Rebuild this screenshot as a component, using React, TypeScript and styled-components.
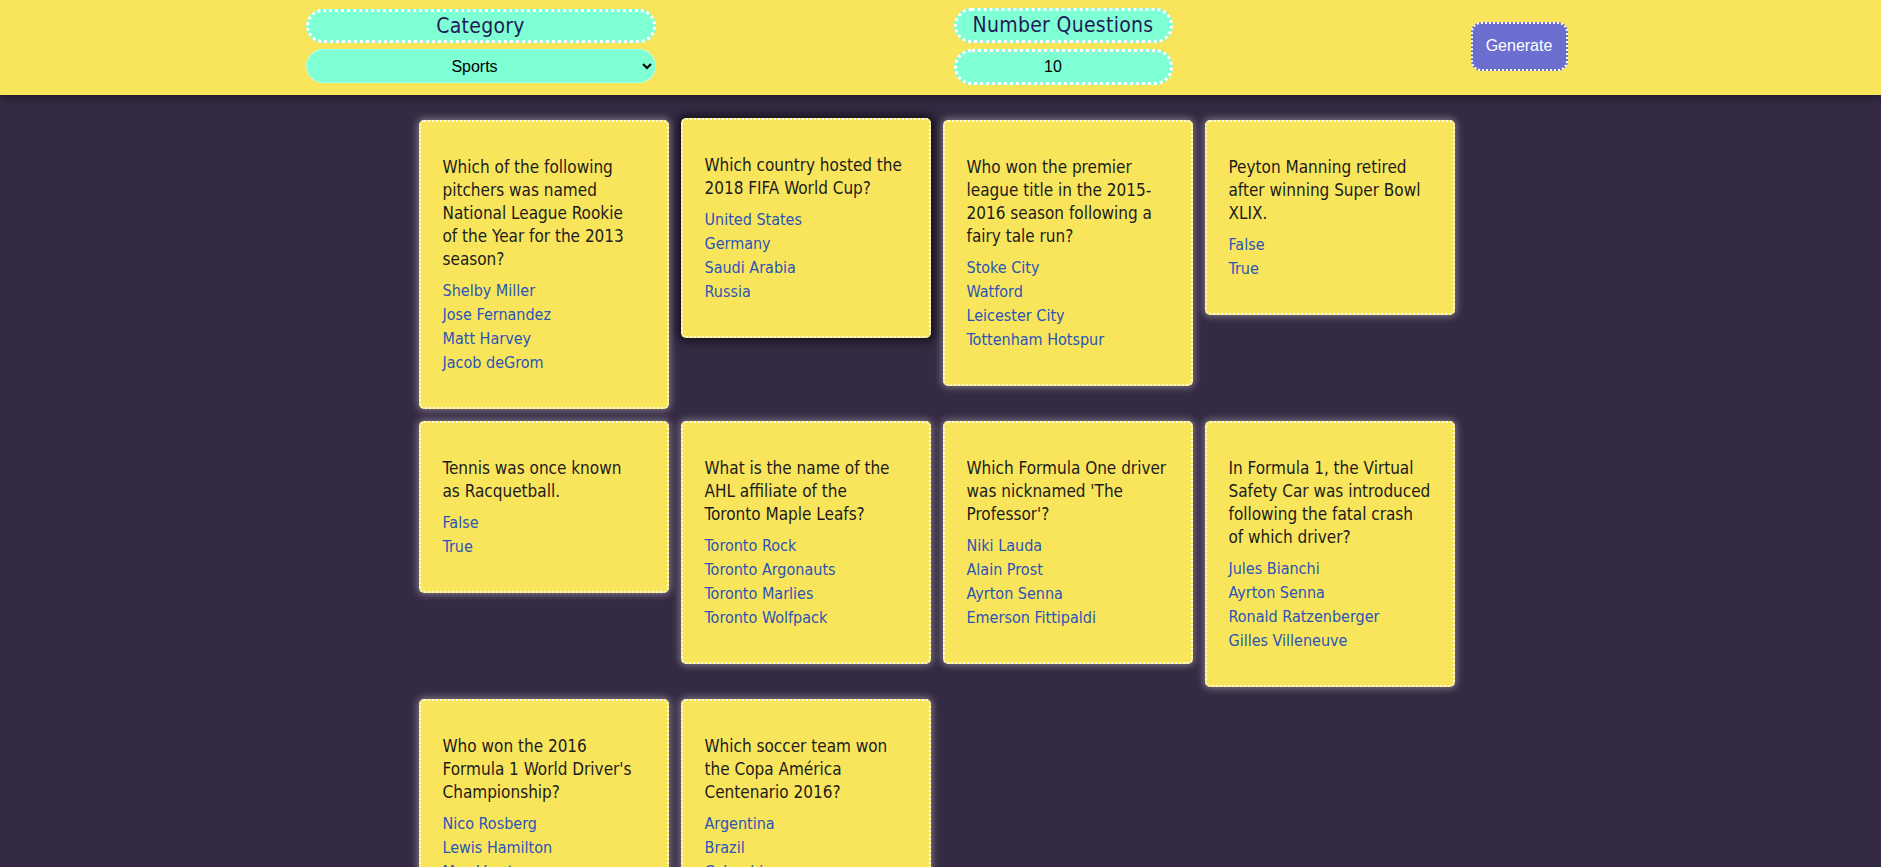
import React from "react";
import styled, { createGlobalStyle, css } from "styled-components";

const GlobalStyle = createGlobalStyle`
  html, body {
    margin: 0;
    padding: 0;
    background: #342a43;
  }
  body {
    font-family: "Liberation Sans", Arial, sans-serif;
  }
`;

const narrow = `"DejaVu Sans Condensed", "DejaVu Sans", "Liberation Sans", sans-serif`;

const Page = styled.div`
  min-height: 100vh;
  background: #342a43;
`;

const Header = styled.header`
  position: relative;
  z-index: 1;
  height: 95px;
  box-sizing: border-box;
  padding: 0 8px 3px 0;
  background: #f9e55c;
  display: flex;
  align-items: center;
  justify-content: center;
  gap: 298px;
  box-shadow: 0 2px 8px rgba(0, 0, 0, 0.45);
`;

const Field = styled.div`
  display: flex;
  flex-direction: column;
  gap: 6px;
`;

const Label = styled.div<{ $w: number; $h: number }>`
  width: ${(p) => p.$w}px;
  height: ${(p) => p.$h}px;
  box-sizing: border-box;
  background: #7fffd4;
  border: 3px dotted #ffffff;
  border-radius: 20px;
  display: flex;
  align-items: center;
  justify-content: center;
  font-family: ${narrow};
  font-size: 21px;
  letter-spacing: 0.3px;
  color: #221c56;
  white-space: nowrap;
`;

const Select = styled.select`
  width: 350px;
  height: 34px;
  box-sizing: border-box;
  background: #7fffd4;
  border: 1px dotted #ffffff;
  border-radius: 17px;
  padding: 0 8px;
  font-family: "Liberation Sans", Arial, sans-serif;
  font-size: 16px;
  color: #000;
  text-align: center;
  text-align-last: center;
  outline: none;
`;

const NumberInput = styled.input`
  width: 219px;
  height: 36px;
  box-sizing: border-box;
  background: #7fffd4;
  border: 3px dotted #ffffff;
  border-radius: 18px;
  padding: 0 5px 0 0;
  font-family: "Liberation Sans", Arial, sans-serif;
  font-size: 16px;
  color: #000;
  text-align: center;
  outline: none;
`;

const Button = styled.button`
  width: 97px;
  height: 49px;
  box-sizing: border-box;
  background: #6b6dcf;
  border: 2px dotted #ffffff;
  border-radius: 10px;
  color: #ffffff;
  font-family: "Liberation Sans", Arial, sans-serif;
  font-size: 16px;
  cursor: pointer;
`;

const Grid = styled.main`
  display: grid;
  grid-template-columns: repeat(4, 250px);
  gap: 12px;
  align-items: start;
  justify-content: center;
  padding: 25px 8px 40px 0;
`;

const Card = styled.article<{ $raised?: boolean }>`
  box-sizing: border-box;
  background: #f9e55c;
  border: 2px dotted #fffbe6;
  border-radius: 5px;
  padding: 34px 22px 32px;
  box-shadow: 0 0 7px 2px rgba(255, 255, 255, 0.32);
  ${(p) =>
    p.$raised &&
    css`
      transform: translateY(-2px);
      box-shadow: 0 0 9px 4px rgba(0, 0, 0, 0.55);
    `}
`;

const Question = styled.p`
  margin: 0 0 8px;
  font-family: ${narrow};
  font-size: 17px;
  line-height: 23px;
  color: #1c1c1c;
  white-space: nowrap;
`;

const Answers = styled.ul`
  list-style: none;
  margin: 0;
  padding: 0;
`;

const Answer = styled.li`
  font-family: ${narrow};
  font-size: 16px;
  line-height: 24px;
  color: #2a54b6;
  white-space: nowrap;
`;

type Q = { lines: string[]; answers: string[]; raised?: boolean };

const questions: Q[] = [
  {
    lines: [
      "Which of the following",
      "pitchers was named",
      "National League Rookie",
      "of the Year for the 2013",
      "season?",
    ],
    answers: ["Shelby Miller", "Jose Fernandez", "Matt Harvey", "Jacob deGrom"],
  },
  {
    lines: ["Which country hosted the", "2018 FIFA World Cup?"],
    answers: ["United States", "Germany", "Saudi Arabia", "Russia"],
    raised: true,
  },
  {
    lines: [
      "Who won the premier",
      "league title in the 2015-",
      "2016 season following a",
      "fairy tale run?",
    ],
    answers: ["Stoke City", "Watford", "Leicester City", "Tottenham Hotspur"],
  },
  {
    lines: ["Peyton Manning retired", "after winning Super Bowl", "XLIX."],
    answers: ["False", "True"],
  },
  {
    lines: ["Tennis was once known", "as Racquetball."],
    answers: ["False", "True"],
  },
  {
    lines: ["What is the name of the", "AHL affiliate of the", "Toronto Maple Leafs?"],
    answers: ["Toronto Rock", "Toronto Argonauts", "Toronto Marlies", "Toronto Wolfpack"],
  },
  {
    lines: ["Which Formula One driver", "was nicknamed 'The", "Professor'?"],
    answers: ["Niki Lauda", "Alain Prost", "Ayrton Senna", "Emerson Fittipaldi"],
  },
  {
    lines: [
      "In Formula 1, the Virtual",
      "Safety Car was introduced",
      "following the fatal crash",
      "of which driver?",
    ],
    answers: ["Jules Bianchi", "Ayrton Senna", "Ronald Ratzenberger", "Gilles Villeneuve"],
  },
  {
    lines: ["Who won the 2016", "Formula 1 World Driver's", "Championship?"],
    answers: ["Nico Rosberg", "Lewis Hamilton", "Max Verstappen", "Sebastian Vettel"],
  },
  {
    lines: ["Which soccer team won", "the Copa América", "Centenario 2016?"],
    answers: ["Argentina", "Brazil", "Colombia", "Chile"],
  },
];

export default function App() {
  return (
    <Page>
      <GlobalStyle />
      <Header>
        <Field>
          <Label $w={350} $h={34}>Category</Label>
          <Select defaultValue="sports">
            <option value="sports">Sports</option>
            <option value="history">History</option>
            <option value="science">Science</option>
          </Select>
        </Field>
        <Field>
          <Label $w={219} $h={35}>Number Questions</Label>
          <NumberInput type="number" defaultValue={10} />
        </Field>
        <Button type="button">Generate</Button>
      </Header>
      <Grid>
        {questions.map((q, i) => (
          <Card key={i} $raised={q.raised}>
            <Question>
              {q.lines.map((l, j) => (
                <React.Fragment key={j}>
                  {j > 0 && <br />}
                  {l}
                </React.Fragment>
              ))}
            </Question>
            <Answers>
              {q.answers.map((a) => (
                <Answer key={a}>{a}</Answer>
              ))}
            </Answers>
          </Card>
        ))}
      </Grid>
    </Page>
  );
}
